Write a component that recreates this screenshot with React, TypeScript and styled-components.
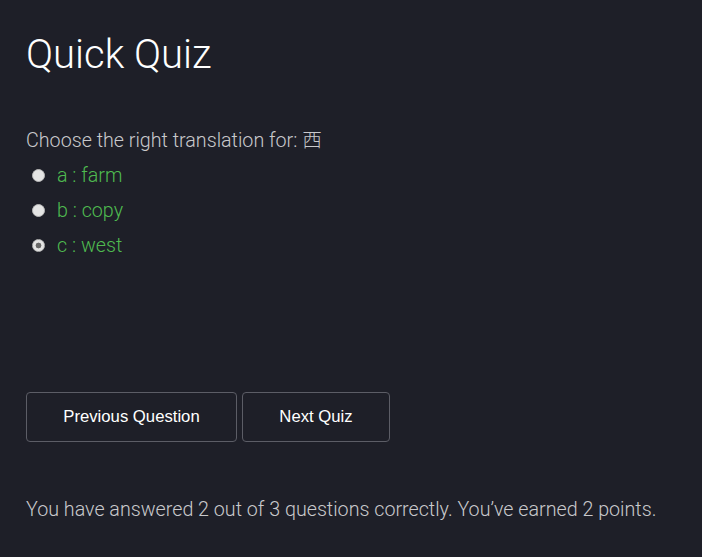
import React from "react";
import styled, { createGlobalStyle } from "styled-components";

const Global = createGlobalStyle`
  html, body { margin: 0; padding: 0; background: #1e1f28; }
  body { font-family: Roboto, "Noto Sans CJK SC", sans-serif; }
`;

const Page = styled.div`
  min-height: 557px;
  box-sizing: border-box;
  padding: 31px 26px 0 26px;
  background: #1e1f28;
  display: flex;
  flex-direction: column;
`;

const Title = styled.h1`
  margin: 0;
  font-size: 40px;
  font-weight: 300;
  color: #ffffff;
  line-height: 47px;
`;

const Question = styled.div`
  margin-top: 51px;
  font-size: 19.7px;
  font-weight: 300;
  color: #c9c9cc;
  line-height: 24px;
`;

const Options = styled.div`
  display: flex;
  flex-direction: column;
  margin-top: 5px;
`;

const Option = styled.label`
  display: flex;
  align-items: center;
  height: 35px;
  font-size: 19.7px;
  font-weight: 300;
  color: #4fbb50;
`;

const Radio = styled.input`
  appearance: none;
  -webkit-appearance: none;
  box-sizing: border-box;
  margin: 0 12px 0 6px;
  width: 13px;
  height: 13px;
  border-radius: 50%;
  border: 1px solid #b9b9b9;
  background: #e4e4e4;
  &:checked {
    background: radial-gradient(circle, #686868 0 2.6px, #e4e4e4 3.2px);
  }
`;

const Buttons = styled.div`
  display: flex;
  gap: 5px;
  margin-top: 129px;
`;

const Button = styled.button<{ $w: number }>`
  width: ${(p) => p.$w}px;
  height: 50px;
  background: transparent;
  border: 1px solid #5c5d66;
  border-radius: 4px;
  color: #ffffff;
  font-family: "Liberation Sans", Arial, sans-serif;
  font-size: 16.7px;
`;

const Summary = styled.p`
  margin: 56px 0 0 0;
  font-size: 19.7px;
  font-weight: 300;
  color: #c9c9cc;
  line-height: 24px;
`;

export default function App() {
  return (
    <>
      <Global />
      <Page>
        <Title>Quick Quiz</Title>
        <Question>Choose the right translation for: 西</Question>
        <Options>
          <Option>
            <Radio type="radio" name="q" disabled />a : farm
          </Option>
          <Option>
            <Radio type="radio" name="q" disabled />b : copy
          </Option>
          <Option>
            <Radio type="radio" name="q" disabled defaultChecked />c : west
          </Option>
        </Options>
        <Buttons>
          <Button $w={211}>Previous Question</Button>
          <Button $w={148}>Next Quiz</Button>
        </Buttons>
        <Summary>
          You have answered 2 out of 3 questions correctly. You’ve earned 2 points.
        </Summary>
      </Page>
    </>
  );
}
